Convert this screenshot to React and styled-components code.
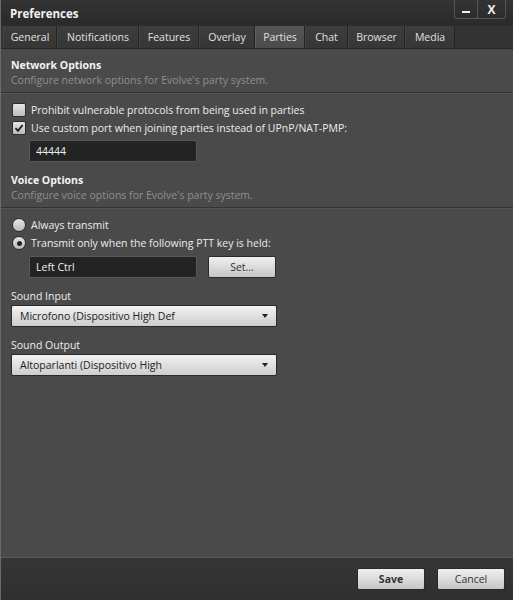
import React, { useState } from "react";
import styled, { createGlobalStyle } from "styled-components";

const GlobalStyle = createGlobalStyle`
  html, body {
    margin: 0;
    padding: 0;
    background: #2c2c2c;
  }
  body {
    font-family: "Open Sans", "Noto Sans", sans-serif;
    font-size: 10.5px;
    color: #e6e6e6;
  }
`;

const Window = styled.div`
  width: 513px;
  height: 600px;
  display: flex;
  flex-direction: column;
  background: #2e2e2e;
  border-left: 1px solid #6a6a6a;
  box-sizing: border-box;
`;

const TitleBar = styled.div`
  height: 26px;
  display: flex;
  align-items: flex-start;
  justify-content: space-between;
  background: linear-gradient(#333, #2a2a2a);
`;

const Title = styled.div`
  font-weight: 700;
  font-size: 11.5px;
  color: #f2f2f2;
  padding: 6px 0 0 9px;
`;

const WinButtons = styled.div`
  display: flex;
  margin-right: 7px;
  border: 1px solid #555;
  border-top: none;
  border-radius: 0 0 3px 3px;
  height: 18px;
`;

const WinButton = styled.div`
  width: ${(p) => p.w}px;
  display: flex;
  align-items: center;
  justify-content: center;
  color: #f0f0f0;
  font-weight: 700;
  font-size: 12px;
  & + & {
    border-left: 1px solid #555;
  }
`;

const MinBar = styled.span`
  width: 8px;
  height: 2px;
  background: #f0f0f0;
  margin-top: 6px;
`;

const TabRow = styled.div`
  height: 22px;
  display: flex;
  padding-left: 2px;
  background: #333;
  border-bottom: 1px solid #262626;
`;

const Tab = styled.div`
  width: ${(p) => p.w}px;
  box-sizing: border-box;
  display: flex;
  align-items: center;
  justify-content: center;
  color: #e0e0e0;
  background: ${(p) => (p.active ? "linear-gradient(#565656, #4b4b4b)" : "linear-gradient(#3d3d3d, #363636)")};
  border-right: 1px solid #242424;
  border-left: 1px solid ${(p) => (p.active ? "#5e5e5e" : "#444")};
`;

const Content = styled.div`
  flex: 1;
  background: #4a4a4a;
  padding: 9px 0 0 10px;
  border-bottom: 1px solid #5a5a5a;
`;

const SectionTitle = styled.div`
  font-weight: 700;
  color: #f4f4f4;
  line-height: 14px;
  margin-top: ${(p) => p.mt || 0}px;
`;

const SectionDesc = styled.div`
  color: #8f8f8f;
  line-height: 16px;
`;

const Divider = styled.div`
  height: 1px;
  background: #333;
  border-bottom: 1px solid #555;
  margin: 4px 0 7px -10px;
`;

const OptionRow = styled.label`
  display: flex;
  align-items: center;
  gap: 5px;
  height: 18px;
  color: #ececec;
`;

const Box = styled.span`
  width: 12px;
  height: 12px;
  border-radius: ${(p) => (p.round ? "50%" : "2px")};
  background: linear-gradient(#e4e4e4, #bcbcbc);
  border: 1px solid #2d2d2d;
  display: flex;
  align-items: center;
  justify-content: center;
  margin-left: 1px;
`;

const Dot = styled.span`
  width: 5px;
  height: 5px;
  border-radius: 50%;
  background: #222;
`;

const FieldRow = styled.div`
  display: flex;
  gap: 11px;
  margin: ${(p) => p.mt}px 0 0 18px;
`;

const TextBox = styled.div`
  width: 168px;
  height: 22px;
  box-sizing: border-box;
  background: #232323;
  border: 1px solid #595959;
  border-radius: 2px;
  padding: 0 6px;
  display: flex;
  align-items: center;
  color: #efefef;
`;

const Button = styled.div`
  width: ${(p) => p.w}px;
  height: 22px;
  box-sizing: border-box;
  border-radius: 2px;
  background: linear-gradient(#f0f0f0, #c6c6c6);
  border: 1px solid #2a2a2a;
  color: #333;
  font-weight: ${(p) => (p.bold ? 700 : 400)};
  display: flex;
  align-items: center;
  justify-content: center;
`;

const Label = styled.div`
  color: #ececec;
  margin-top: ${(p) => p.mt}px;
  line-height: 14px;
`;

const Select = styled.div`
  width: 266px;
  height: 22px;
  box-sizing: border-box;
  border-radius: 2px;
  background: linear-gradient(#f2f2f2, #cdcdcd);
  border: 1px solid #2a2a2a;
  color: #222;
  display: flex;
  align-items: center;
  justify-content: space-between;
  padding: 0 8px;
  margin-top: 2px;
`;

const Caret = styled.span`
  width: 0;
  height: 0;
  border-left: 3px solid transparent;
  border-right: 3px solid transparent;
  border-top: 4px solid #222;
`;

const Footer = styled.div`
  height: 42px;
  background: linear-gradient(#363636, #2f2f2f);
  display: flex;
  justify-content: flex-end;
  align-items: center;
  gap: 12px;
  padding-right: 8px;
`;

const Check = () => (
  <svg width="10" height="10" viewBox="0 0 10 10">
    <path d="M1.5 5.2 L4 7.8 L8.6 2" stroke="#1c1c1c" strokeWidth="1.8" fill="none" />
  </svg>
);

const tabs = [
  ["General", 54],
  ["Notifications", 82],
  ["Features", 60],
  ["Overlay", 56],
  ["Parties", 50],
  ["Chat", 43],
  ["Browser", 57],
  ["Media", 50],
];

export default function App() {
  const [active] = useState("Parties");
  return (
    <Window>
      <GlobalStyle />
      <TitleBar>
        <Title>Preferences</Title>
        <WinButtons>
          <WinButton w={22}>
            <MinBar />
          </WinButton>
          <WinButton w={27}>X</WinButton>
        </WinButtons>
      </TitleBar>
      <TabRow>
        {tabs.map(([t, w]) => (
          <Tab key={t} w={w} active={t === active}>
            {t}
          </Tab>
        ))}
      </TabRow>
      <Content>
        <SectionTitle>Network Options</SectionTitle>
        <SectionDesc>Configure network options for Evolve's party system.</SectionDesc>
        <Divider />
        <OptionRow>
          <Box />
          Prohibit vulnerable protocols from being used in parties
        </OptionRow>
        <OptionRow>
          <Box>
            <Check />
          </Box>
          Use custom port when joining parties instead of UPnP/NAT-PMP:
        </OptionRow>
        <FieldRow mt={3}>
          <TextBox>44444</TextBox>
        </FieldRow>

        <SectionTitle mt={11}>Voice Options</SectionTitle>
        <SectionDesc>Configure voice options for Evolve's party system.</SectionDesc>
        <Divider />
        <OptionRow>
          <Box round />
          Always transmit
        </OptionRow>
        <OptionRow>
          <Box round>
            <Dot />
          </Box>
          Transmit only when the following PTT key is held:
        </OptionRow>
        <FieldRow mt={4}>
          <TextBox>Left Ctrl</TextBox>
          <Button w={68}>Set...</Button>
        </FieldRow>

        <Label mt={11}>Sound Input</Label>
        <Select>
          Microfono (Dispositivo High Def
          <Caret />
        </Select>
        <Label mt={11}>Sound Output</Label>
        <Select>
          Altoparlanti (Dispositivo High
          <Caret />
        </Select>
      </Content>
      <Footer>
        <Button w={68} bold>Save</Button>
        <Button w={68}>Cancel</Button>
      </Footer>
    </Window>
  );
}
